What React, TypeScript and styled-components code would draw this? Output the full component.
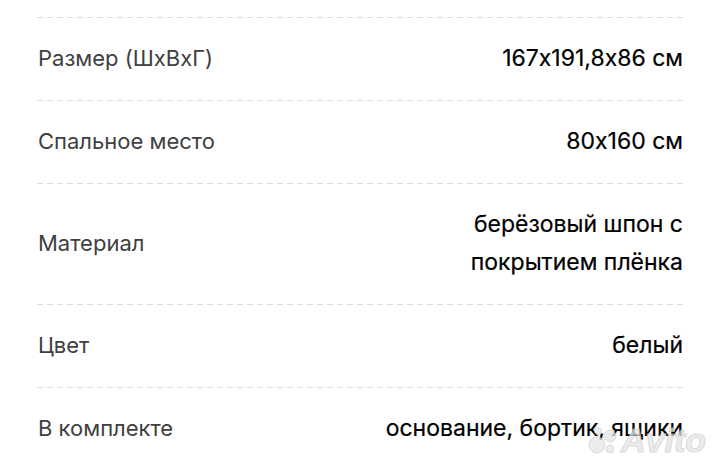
import styled, { createGlobalStyle } from "styled-components";

const GlobalStyle = createGlobalStyle`
  html, body {
    margin: 0;
    padding: 0;
    background: #ffffff;
  }
  body {
    font-family: Inter, "Noto Sans", sans-serif;
    font-feature-settings: "calt" 0;
    -webkit-font-smoothing: antialiased;
  }
`;

const Page = styled.div`
  position: relative;
  width: 720px;
  height: 469px;
  overflow: hidden;
  background: #ffffff;
  padding: 17px 37px 0 37px;
  box-sizing: border-box;
`;

const Row = styled.div`
  display: flex;
  align-items: center;
  justify-content: space-between;
  gap: 24px;
  padding: 22px 0 23px 1px;
  background-image: repeating-linear-gradient(
    to right,
    #dcdcdc 0,
    #dcdcdc 6px,
    transparent 6px,
    transparent 10px
  );
  background-size: 100% 1px;
  background-repeat: no-repeat;
  background-position: top left;
`;

const Label = styled.span`
  font-size: 22px;
  line-height: 38px;
  color: #404040;
  white-space: nowrap;
`;

const Value = styled.span<{ $width?: number }>`
  font-size: 23px;
  line-height: 38px;
  font-weight: 400;
  color: #000000;
  text-align: right;
  -webkit-text-stroke: 0.2px #000000;
  max-width: ${(p) => (p.$width ? `${p.$width}px` : "none")};
  white-space: ${(p) => (p.$width ? "normal" : "nowrap")};
`;

const Watermark = styled.div`
  position: absolute;
  right: 14px;
  bottom: 12px;
  display: flex;
  align-items: center;
  gap: 3px;
  opacity: 0.75;
  pointer-events: none;
`;

const Dots = styled.svg`
  width: 30px;
  height: 28px;
`;

const Brand = styled.span`
  font-family: "Liberation Sans", Arial, sans-serif;
  font-size: 34px;
  font-weight: 700;
  font-style: italic;
  color: #e6e6e6;
  -webkit-text-stroke: 1px #cfcfcf;
  line-height: 1;
`;

const specs: { label: string; value: string; width?: number }[] = [
  { label: "Размер (ШхВхГ)", value: "167x191,8x86 см" },
  { label: "Спальное место", value: "80x160 см" },
  { label: "Материал", value: "берёзовый шпон с покрытием плёнка", width: 230 },
  { label: "Цвет", value: "белый" },
  { label: "В комплекте", value: "основание, бортик, ящики" },
];

export default function App() {
  return (
    <>
      <GlobalStyle />
      <Page>
        {specs.map((s) => (
          <Row key={s.label}>
            <Label>{s.label}</Label>
            <Value $width={s.width}>{s.value}</Value>
          </Row>
        ))}
        <Watermark>
          <Dots viewBox="0 0 30 28">
            <circle cx="9" cy="19" r="8" fill="#e6e6e6" stroke="#cfcfcf" />
            <circle cx="22" cy="10" r="6" fill="#e6e6e6" stroke="#cfcfcf" />
            <circle cx="22" cy="23" r="4" fill="#e6e6e6" stroke="#cfcfcf" />
            <circle cx="10" cy="5" r="3.5" fill="#e6e6e6" stroke="#cfcfcf" />
          </Dots>
          <Brand>Avito</Brand>
        </Watermark>
      </Page>
    </>
  );
}
